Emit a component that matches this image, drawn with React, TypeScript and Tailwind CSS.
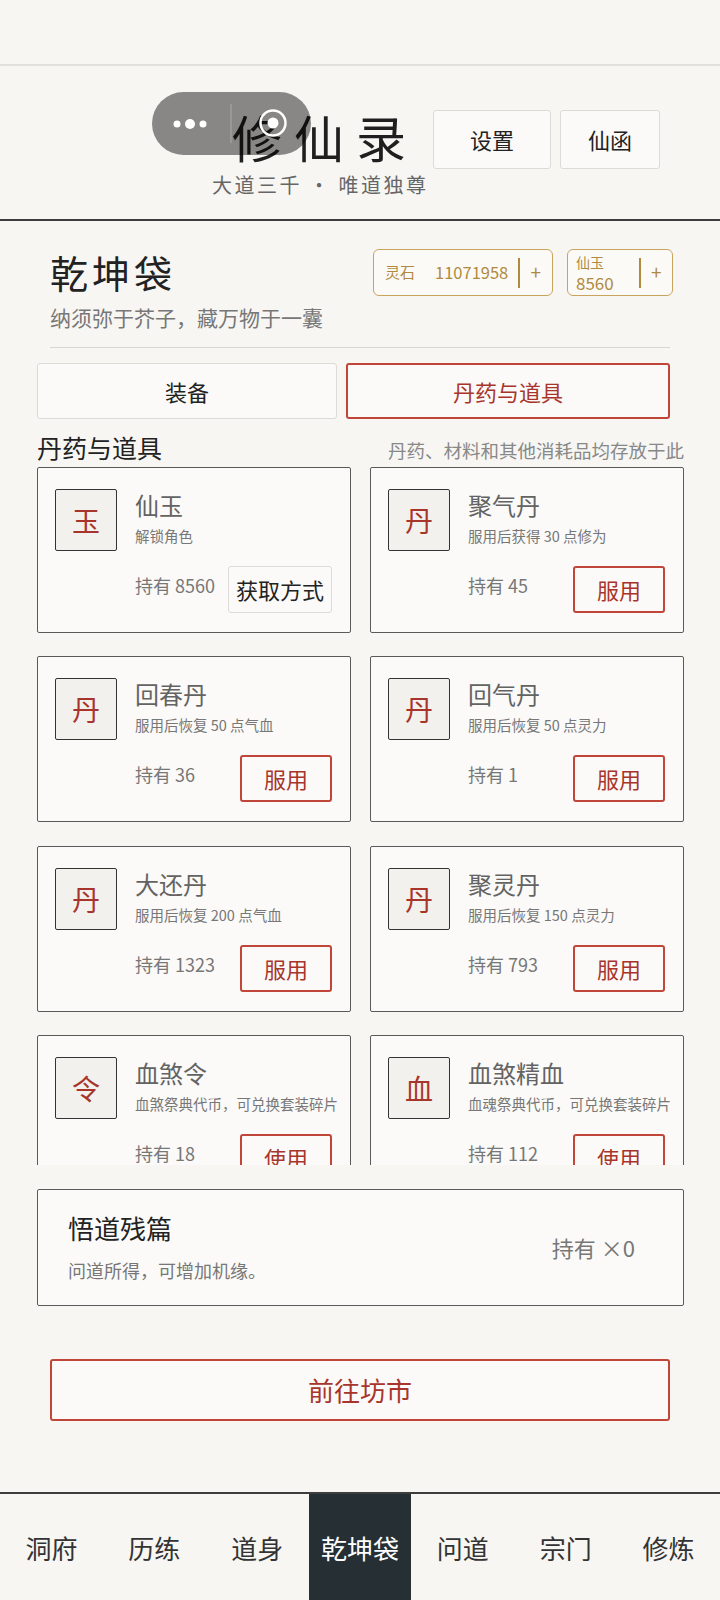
import React from "react";

type Item = {
  icon: string;
  name: string;
  desc: string;
  count: number;
  action: string;
  red: boolean;
};

const ITEMS: Item[] = [
  { icon: "玉", name: "仙玉", desc: "解锁角色", count: 8560, action: "获取方式", red: false },
  { icon: "丹", name: "聚气丹", desc: "服用后获得 30 点修为", count: 45, action: "服用", red: true },
  { icon: "丹", name: "回春丹", desc: "服用后恢复 50 点气血", count: 36, action: "服用", red: true },
  { icon: "丹", name: "回气丹", desc: "服用后恢复 50 点灵力", count: 1, action: "服用", red: true },
  { icon: "丹", name: "大还丹", desc: "服用后恢复 200 点气血", count: 1323, action: "服用", red: true },
  { icon: "丹", name: "聚灵丹", desc: "服用后恢复 150 点灵力", count: 793, action: "服用", red: true },
  { icon: "令", name: "血煞令", desc: "血煞祭典代币，可兑换套装碎片", count: 18, action: "使用", red: true },
  { icon: "血", name: "血煞精血", desc: "血魂祭典代币，可兑换套装碎片", count: 112, action: "使用", red: true },
];

const NAV = ["洞府", "历练", "道身", "乾坤袋", "问道", "宗门", "修炼"];

function ItemCard({ item }: { item: Item }) {
  return (
    <div className="h-[166px] rounded-[2px] border border-[#5a5a5a] bg-[#fbfaf8] pl-[17px] pr-[18px] pt-[21px]">
      <div className="flex gap-[18px]">
        <div className="flex h-[62px] w-[62px] shrink-0 items-center justify-center rounded-[2px] border border-[#333] bg-[#f3f1ed] text-[28px] text-[#a8352b]">
          {item.icon}
        </div>
        <div className="min-w-0 flex-1">
          <div className="text-[24px] leading-[32px] text-[#636363]">{item.name}</div>
          <div className="mt-[5px] whitespace-nowrap text-[14.5px] leading-[20px] text-[#777]">
            {item.desc}
          </div>
          <div className="mt-[20px] flex items-center justify-between">
            <span className="mb-[8px] whitespace-nowrap text-[18px] text-[#777]">持有 {item.count}</span>
            {item.red ? (
              <button className="h-[47px] w-[92px] rounded-[3px] border-2 border-[#c0463a] bg-[#fbfaf8] text-[22px] text-[#a8352b]">
                {item.action}
              </button>
            ) : (
              <button className="h-[47px] w-[104px] rounded-[3px] border-[1.5px] border-[#dddbd7] bg-[#fbfaf8] text-[22px] text-[#222]">
                {item.action}
              </button>
            )}
          </div>
        </div>
      </div>
    </div>
  );
}

export default function App() {
  return (
    <div className="relative flex h-[1600px] w-full flex-col overflow-hidden bg-[#f7f6f3] font-['Noto_Sans_CJK_SC','Noto_Sans',sans-serif]">
      {/* status area */}
      <div className="h-[66px] shrink-0 border-b-2 border-[#e2e0dc]" />

      {/* header */}
      <header className="flex items-start border-b-2 border-[#3d3d3d] pb-[21px] pt-[40px]">
        <div className="ml-[205px] w-[228px] text-center">
          <div className="pl-[12px] text-[50px] leading-[60px] tracking-[12px] text-[#1f1f1f]">修仙录</div>
          <div className="mt-[6px] pl-[2.5px] text-[20px] leading-[26px] tracking-[2.5px] text-[#666]">
            大道三千 · 唯道独尊
          </div>
        </div>
        <div className="mt-[4px] flex gap-[9px]">
          <button className="h-[59px] w-[118px] rounded-[3px] border-[1.5px] border-[#dddbd7] bg-[#fbfaf8] text-[22px] text-[#222]">
            设置
          </button>
          <button className="h-[59px] w-[100px] rounded-[3px] border-[1.5px] border-[#dddbd7] bg-[#fbfaf8] text-[22px] text-[#222]">
            仙函
          </button>
        </div>
      </header>

      {/* bag title */}
      <section className="ml-[50px] w-[620px] pt-[28px]">
        <div className="flex items-start justify-between">
          <div>
            <div className="text-[38px] leading-[46px] tracking-[4px] text-[#222]">乾坤袋</div>
            <div className="mt-[7px] text-[21px] leading-[30px] text-[#777]">纳须弥于芥子，藏万物于一囊</div>
          </div>
          <div className="-mr-[3px] flex gap-[14px] text-[#b08a3e]">
            <div className="flex h-[47px] w-[180px] items-center rounded-[6px] border-[1.5px] border-[#c9a45c] bg-[#fbfaf7] pl-[11px]">
              <span className="text-[15px]">灵石</span>
              <span className="ml-[20px] text-[16.5px]">11071958</span>
              <span className="ml-[10px] h-[30px] w-[1.5px] bg-[#b08a3e]" />
              <span className="flex-1 text-center text-[19px]">+</span>
            </div>
            <div className="flex h-[47px] w-[106px] items-center rounded-[6px] border-[1.5px] border-[#c9a45c] bg-[#fbfaf7] pl-[8px]">
              <div className="flex w-[63px] flex-col">
                <span className="text-[14px] leading-[19px]">仙玉</span>
                <span className="text-[17px] leading-[21px]">8560</span>
              </div>
              <span className="h-[30px] w-[1.5px] bg-[#b08a3e]" />
              <span className="flex-1 text-center text-[19px]">+</span>
            </div>
          </div>
        </div>
        <div className="mt-[15px] h-px bg-[#d9d7d2]" />
      </section>

      {/* tabs */}
      <div className="ml-[37px] mt-[15px] flex w-[633px] gap-[9px]">
        <button className="h-[56px] w-[300px] rounded-[3px] border-[1.5px] border-[#dddbd7] bg-[#fbfaf8] text-[22px] text-[#222]">
          装备
        </button>
        <button className="h-[56px] flex-1 rounded-[3px] border-2 border-[#c0463a] bg-[#fbfaf8] text-[22px] text-[#a8352b]">
          丹药与道具
        </button>
      </div>

      {/* section header */}
      <div className="ml-[37px] mt-[13px] flex w-[647px] items-baseline justify-between">
        <span className="text-[25px] leading-[30px] text-[#222]">丹药与道具</span>
        <span className="text-[18.5px] text-[#888]">丹药、材料和其他消耗品均存放于此</span>
      </div>

      {/* scroll list */}
      <div className="ml-[37px] mt-[2px] h-[698px] w-[647px] shrink-0 overflow-hidden">
        <div className="grid grid-cols-2 gap-x-[19px] gap-y-[23.5px]">
          {ITEMS.map((item) => (
            <ItemCard key={item.name} item={item} />
          ))}
        </div>
      </div>

      {/* fragments */}
      <div className="ml-[37px] mt-[24px] flex h-[117px] w-[647px] shrink-0 items-center justify-between rounded-[2px] border border-[#5a5a5a] bg-[#fbfaf8] pl-[30px] pr-[48px]">
        <div>
          <div className="text-[26px] leading-[34px] text-[#222]">悟道残篇</div>
          <div className="mt-[12px] text-[18px] leading-[26px] text-[#777]">问道所得，可增加机缘。</div>
        </div>
        <span className="text-[22px] text-[#777]">持有 ×0</span>
      </div>

      <button className="ml-[50px] mt-[53px] h-[62px] w-[620px] shrink-0 rounded-[3px] border-2 border-[#c0463a] bg-[#fbfaf8] text-[26px] text-[#a8352b]">
        前往坊市
      </button>

      {/* bottom nav */}
      <nav className="mt-auto flex h-[108px] shrink-0 border-t-2 border-[#3d3d3d]">
        {NAV.map((label) => (
          <div
            key={label}
            className={`flex flex-1 items-center justify-center text-[26px] ${
              label === "乾坤袋" ? "bg-[#263034] text-white" : "text-[#333]"
            }`}
          >
            {label}
          </div>
        ))}
      </nav>

      {/* mini-program capsule */}
      <div className="absolute left-[152px] top-[92px] z-10 h-[63px] w-[159px] rounded-full bg-black/45">
        <svg width="159" height="63" viewBox="0 0 159 63">
          <circle cx="25" cy="32" r="3.5" fill="#fff" />
          <circle cx="38" cy="32" r="5" fill="#fff" />
          <circle cx="51" cy="32" r="3.5" fill="#fff" />
          <line x1="79" y1="12" x2="79" y2="51" stroke="rgba(255,255,255,0.3)" strokeWidth="1" />
          <circle cx="121" cy="31" r="12.5" fill="none" stroke="#fff" strokeWidth="2.5" />
          <circle cx="121" cy="31" r="5.5" fill="#fff" />
        </svg>
      </div>
    </div>
  );
}
